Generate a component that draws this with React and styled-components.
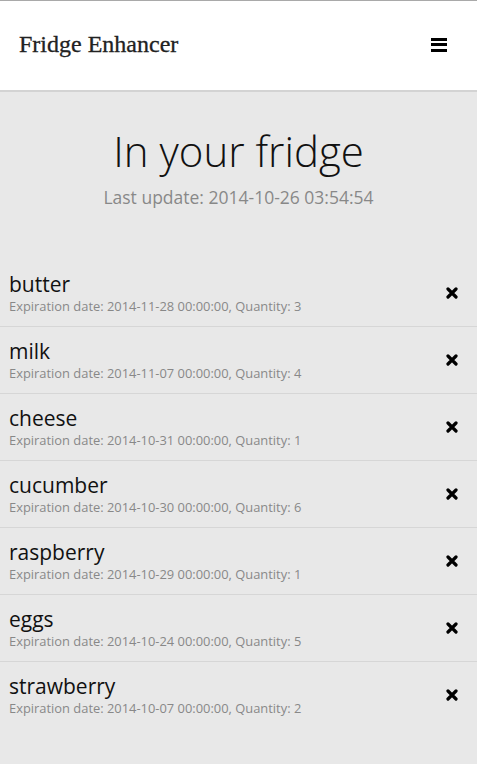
import React from "react";
import styled, { createGlobalStyle } from "styled-components";

const Global = createGlobalStyle`
  html, body { margin: 0; padding: 0; background: #e8e8e8; }
  body { font-family: "Open Sans", "Noto Sans", sans-serif; color: #111; }
`;

const Page = styled.div`
  min-height: 764px;
  background: #e8e8e8;
  border-top: 1px solid #a9a9a9;
  box-sizing: border-box;
`;

const Header = styled.header`
  height: 89px;
  background: #fff;
  border-bottom: 2px solid #d3d3d3;
  display: flex;
  align-items: center;
  justify-content: space-between;
  padding: 0 30px 0 19px;
`;

const Brand = styled.div`
  font-family: "Liberation Serif", serif;
  font-size: 24px;
  color: #222;
  -webkit-text-stroke: 0.3px #222;
  margin-top: -2px;
`;

const Burger = styled.button`
  display: flex;
  flex-direction: column;
  gap: 2.5px;
  width: 16px;
  padding: 0;
  border: 0;
  background: none;
  margin-top: -2px;
  span {
    display: block;
    height: 3px;
    background: #000;
  }
`;

const Hero = styled.section`
  text-align: center;
  padding: 31px 0 51px;
`;

const Title = styled.h1`
  margin: 0;
  font-weight: 300;
  font-size: 42px;
  line-height: 56px;
  color: #111;
`;

const Updated = styled.p`
  margin: 6px 0 0;
  font-size: 17.5px;
  line-height: 24px;
  color: #888;
`;

const List = styled.ul`
  list-style: none;
  margin: 0;
  padding: 0;
`;

const Item = styled.li`
  height: 66px;
  display: flex;
  align-items: center;
  justify-content: space-between;
  padding: 0 19px 0 9px;
  border-bottom: ${(p) => (p.$last ? "0" : "1px solid #d6d6d6")};
`;

const Info = styled.div`
  display: flex;
  flex-direction: column;
  margin-top: 0;
`;

const Name = styled.div`
  font-size: 21px;
  line-height: 26px;
  color: #111;
`;

const Meta = styled.div`
  font-size: 12.9px;
  line-height: 19px;
  color: #888;
`;

const Remove = styled.button`
  border: 0;
  background: none;
  padding: 0;
  width: 12px;
  height: 12px;
  display: flex;
  svg { display: block; }
`;

const items = [
  ["butter", "2014-11-28 00:00:00", 3],
  ["milk", "2014-11-07 00:00:00", 4],
  ["cheese", "2014-10-31 00:00:00", 1],
  ["cucumber", "2014-10-30 00:00:00", 6],
  ["raspberry", "2014-10-29 00:00:00", 1],
  ["eggs", "2014-10-24 00:00:00", 5],
  ["strawberry", "2014-10-07 00:00:00", 2],
];

const Cross = () => (
  <svg width="12" height="12" viewBox="0 0 12 12">
    <path d="M2 2 L10 10 M10 2 L2 10" stroke="#000" strokeWidth="3.2" strokeLinecap="round" />
  </svg>
);

export default function App() {
  return (
    <>
      <Global />
      <Page>
        <Header>
          <Brand>Fridge Enhancer</Brand>
          <Burger aria-label="menu">
            <span />
            <span />
            <span />
          </Burger>
        </Header>
        <Hero>
          <Title>In your fridge</Title>
          <Updated>Last update: 2014-10-26 03:54:54</Updated>
        </Hero>
        <List>
          {items.map(([name, date, qty], i) => (
            <Item key={name} $last={i === items.length - 1}>
              <Info>
                <Name>{name}</Name>
                <Meta>
                  Expiration date: {date}, Quantity: {qty}
                </Meta>
              </Info>
              <Remove aria-label="remove">
                <Cross />
              </Remove>
            </Item>
          ))}
        </List>
      </Page>
    </>
  );
}
